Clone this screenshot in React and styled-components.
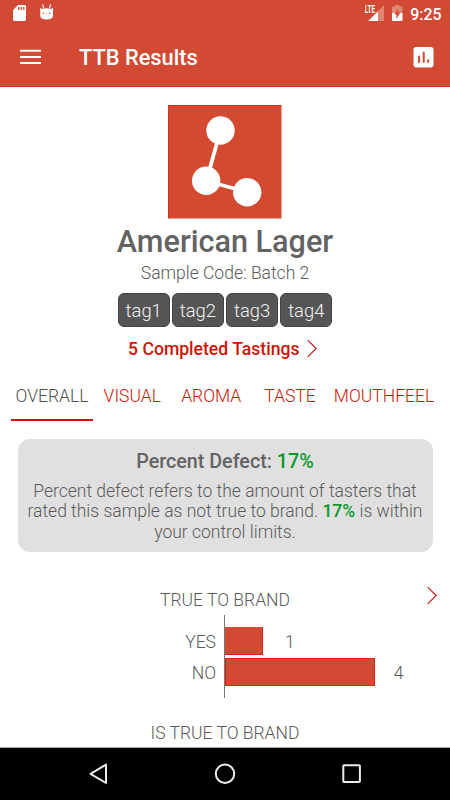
import React from 'react';
import styled, { createGlobalStyle } from 'styled-components';

const BRAND = '#d24a33';
const LINK = '#cf1408';

const GlobalStyle = createGlobalStyle`
  * { box-sizing: border-box; }
  body {
    margin: 0;
    background: #fff;
    color: #5a5a5a;
    font-family: Roboto, sans-serif;
    font-weight: 300;
    font-size: 17.5px;
  }
  svg { display: block; flex: none; }
`;

const Screen = styled.div`
  display: flex;
  flex-direction: column;
  width: 450px;
  height: 800px;
  overflow: hidden;
`;

const Header = styled.header`
  flex: none;
  height: 87px;
  background: ${BRAND};
  border-bottom: 1px solid #d2401c;
  color: #fff;
`;

const StatusBar = styled.div`
  display: flex;
  justify-content: space-between;
  height: 27px;
  padding: 0 8.5px 0 12px;
`;

const StatusGroup = styled.div`
  display: flex;
  gap: ${({ $gap }) => $gap}px;
`;

const Clock = styled.time`
  font-size: 15.9px;
  font-weight: 500;
  line-height: 29px;
`;

const AppBar = styled.div`
  display: flex;
  align-items: center;
  height: 60px;
  padding: 0 16px 0 20px;
`;

const Title = styled.h1`
  flex: 1;
  margin: 2px 0 0 38px;
  font-size: 21.8px;
  font-weight: 500;
  line-height: 58px;
`;

const Content = styled.main`
  flex: 1;
  min-height: 0;
  overflow: hidden;
  display: flex;
  flex-direction: column;
  align-items: center;
  padding-top: 18px;
`;

const SampleName = styled.h2`
  margin: 8px 0 0;
  color: #636363;
  font-size: 30.6px;
  font-weight: 500;
  line-height: 30px;
`;

const SampleCode = styled.div`
  margin-top: 6px;
  line-height: 20px;
`;

const Tags = styled.div`
  display: flex;
  gap: 2.2px;
  margin-top: 10px;
`;

const Tag = styled.span`
  width: 52px;
  height: 34px;
  border: 1px solid #444;
  border-radius: 6px;
  background: #555;
  color: #f4f4f4;
  font-size: 18.4px;
  line-height: 34px;
  text-align: center;
`;

const TastingsLink = styled.a`
  display: flex;
  align-items: center;
  gap: 7.5px;
  margin-top: 12px;
  padding-right: 5px;
  color: ${LINK};
  font-size: 17.6px;
  font-weight: 500;
  line-height: 20px;
`;

const Tabs = styled.nav`
  display: grid;
  grid-template-columns: 82px 78.5px 79.5px 78px 110px;
  width: 428px;
  margin-top: 12px;
`;

const Tab = styled.a`
  height: 50px;
  border-bottom: 2px solid ${({ $active }) => ($active ? '#d40d08' : 'transparent')};
  color: ${({ $active }) => ($active ? '#505050' : LINK)};
  line-height: 50px;
  text-align: center;
`;

const Panel = styled.section`
  flex: none;
  width: 415px;
  height: 112.5px;
  margin-top: 18px;
  padding-top: 11px;
  border-radius: 12px;
  background: #e0e0e0;
  text-align: center;
`;

const PanelTitle = styled.h3`
  margin: 0 0 6.5px;
  color: #636363;
  font-size: 19.7px;
  font-weight: 500;
  line-height: 24px;
`;

const PanelText = styled.p`
  margin: 0;
  padding: 0 8px;
  line-height: 20.5px;
`;

const Good = styled.strong`
  color: #0a982e;
  font-weight: 500;
`;

const ChartHeader = styled.div`
  display: grid;
  grid-template-columns: 1fr auto 1fr;
  width: 450px;
  margin-top: 35px;
  padding-right: 13px;
  padding-left: 13px;
  svg { justify-self: end; }
`;

const ChartTitle = styled.h4`
  grid-column: 2;
  margin: ${({ $top }) => $top || 0}px 0 0;
  font-size: 17.5px;
  font-weight: 300;
  line-height: 20px;
`;

const Plot = styled.div`
  display: grid;
  grid-template-columns: 216px 1fr;
  width: 450px;
  height: 83px;
  margin-top: 5.5px;
`;

const Labels = styled.div`
  display: flex;
  flex-direction: column;
  gap: 3px;
  padding-top: 12.5px;
  text-align: right;
  line-height: 28px;
`;

const Bars = styled.div`
  display: flex;
  flex-direction: column;
  gap: 3px;
  margin-left: 8px;
  padding-top: 12px;
  border-left: 1.5px solid #777;
`;

const BarRow = styled.div`
  display: flex;
  gap: ${({ $gap }) => $gap}px;
  height: 28px;
  line-height: 31px;
`;

const Bar = styled.div`
  height: 28px;
  border: solid #d2280c;
  border-width: ${({ $edge }) => $edge};
  background: ${BRAND};
`;

const SystemNav = styled.footer`
  flex: none;
  display: flex;
  justify-content: space-between;
  align-items: center;
  height: 53px;
  padding: 0 86px;
  border-top: 1px solid #aaa;
  background: #000;
`;

const SdCardIcon = () => (
  <svg width="15" height="26" viewBox="12 0 15 26">
    <path d="M18 5h6.5Q26 5 26 6.5v13Q26 21 24.500 21h-10Q13 21 13 19.500V10.200z" fill="#fff" />
    <path d="M18.800 7v3M21.300 7v3M23.800 7v3" stroke={BRAND} strokeWidth="1.300" />
  </svg>
);

const CatIcon = () => (
  <svg width="15" height="26" viewBox="38.500 0 15 26">
    <path d="M42.200 4.300l1 4M50 4.300l-1 4" stroke="#fff" strokeWidth="1.100" />
    <path d="M39.700 7.800l2 1.200Q46 7.300 50.500 9l2-1.200v7.400q0 4.300-6.400 4.300t-6.400-4.300z" fill="#fff" />
    <circle cx="43" cy="13.300" r=".8" fill={BRAND} />
    <circle cx="49.200" cy="13.300" r=".8" fill={BRAND} />
    <path d="M45.300 13.800h1.600" stroke="#e7a094" strokeWidth=".7" />
  </svg>
);

const SignalIcon = () => (
  <svg width="20" height="26" viewBox="365 0 20 26">
    <path d="M384 5v16h-16z" fill="#fff" opacity=".32" />
    <path d="M378 11.500V21h-9.800z" fill="#fff" />
    <text x="364.800" y="12.500" textLength="10.400" lengthAdjust="spacingAndGlyphs" fontFamily="Roboto, sans-serif" fontSize="10" fontWeight="700" fill="#fff">LTE</text>
  </svg>
);

const BatteryIcon = () => (
  <svg width="11" height="26" viewBox="393 0 11 26">
    <path d="M396 5h4.500v1.500h3V13h-10.500V6.500h3z" fill="#fff" opacity=".34" />
    <path d="M393 13h10.500v7q0 1-1 1H394q-1 0-1-1z" fill="#fff" />
    <path d="M399.300 8.300v4.200h2.200l-4 6.500v-4.500h-2.200z" fill={BRAND} />
  </svg>
);

const MenuIcon = () => (
  <svg width="21" height="16" viewBox="0 0 21 16">
    <path d="M0 1.800h21M0 7.900h21M0 14h21" stroke="#fff" strokeWidth="2" />
  </svg>
);

const ReportIcon = () => (
  <svg width="21" height="21" viewBox="0 0 21 21">
    <rect x=".5" y="0" width="20" height="20.400" rx="2.800" fill="#fff" />
    <path d="M6.100 8.700v7M10.700 4.700v11M15.200 12.400v3.300" stroke={BRAND} strokeWidth="2" />
  </svg>
);

const Logo = () => (
  <svg width="114" height="114" viewBox="0 0 114 114">
    <rect width="113.500" height="113.500" fill="#d44a31" />
    <path d="M.3 113.500V.3h113.200" stroke="#dc1810" strokeWidth=".6" fill="none" />
    <path d="M52.500 25.500L38.300 76l41 11" stroke="#fff" strokeWidth="3.800" fill="none" />
    <g fill="#fff">
      <circle cx="52.500" cy="25.500" r="14.200" />
      <circle cx="38.200" cy="75.800" r="14.200" />
      <circle cx="79.200" cy="87.200" r="14.200" />
    </g>
  </svg>
);

const Chevron = () => (
  <svg width="10" height="18" viewBox="0 0 10 18">
    <path d="M.7.200L9.200 8.500 .7 16.800" stroke={LINK} strokeWidth="1.100" fill="none" />
  </svg>
);

const BackIcon = () => (
  <svg width="24" height="24" viewBox="0 0 24 24">
    <path d="M4.500 11.800L20 2.600v18.400z" fill="none" stroke="#ececec" strokeWidth="2" strokeLinejoin="round" />
  </svg>
);

const HomeIcon = () => (
  <svg width="24" height="24" viewBox="0 0 24 24">
    <circle cx="12" cy="11.800" r="9.200" fill="none" stroke="#ececec" strokeWidth="2" />
  </svg>
);

const RecentsIcon = () => (
  <svg width="24" height="24" viewBox="0 0 24 24">
    <rect x="3.300" y="3.300" width="16.600" height="16.600" rx=".6" fill="none" stroke="#ececec" strokeWidth="2" />
  </svg>
);

const tabs = ['OVERALL', 'VISUAL', 'AROMA', 'TASTE', 'MOUTHFEEL'];
const tags = ['tag1', 'tag2', 'tag3', 'tag4'];
const results = [
  { label: 'YES', count: 1, width: 38, gap: 22, edge: '0 1px 1px 0' },
  { label: 'NO', count: 4, width: 150.3, gap: 18.5, edge: '1px' },
];

export default function App() {
  return (
    <>
      <GlobalStyle />
      <Screen>
        <Header>
          <StatusBar>
            <StatusGroup $gap={11.5}>
              <SdCardIcon />
              <CatIcon />
            </StatusGroup>
            <StatusGroup $gap={7.3}>
              <SignalIcon />
              <BatteryIcon />
              <Clock>9:25</Clock>
            </StatusGroup>
          </StatusBar>
          <AppBar>
            <MenuIcon />
            <Title>TTB Results</Title>
            <ReportIcon />
          </AppBar>
        </Header>
        <Content>
          <Logo />
          <SampleName>American Lager</SampleName>
          <SampleCode>Sample Code: Batch 2</SampleCode>
          <Tags>
            {tags.map((tag) => (
              <Tag key={tag}>{tag}</Tag>
            ))}
          </Tags>
          <TastingsLink>
            5 Completed Tastings
            <Chevron />
          </TastingsLink>
          <Tabs>
            {tabs.map((tab, i) => (
              <Tab key={tab} $active={i === 0}>{tab}</Tab>
            ))}
          </Tabs>
          <Panel>
            <PanelTitle>
              Percent Defect: <Good>17%</Good>
            </PanelTitle>
            <PanelText>
              Percent defect refers to the amount of tasters that rated this sample as not true to brand.{' '}
              <Good>17%</Good> is within your control limits.
            </PanelText>
          </Panel>
          <ChartHeader>
            <ChartTitle $top={3}>TRUE TO BRAND</ChartTitle>
            <Chevron />
          </ChartHeader>
          <Plot>
            <Labels>
              {results.map(({ label }) => (
                <span key={label}>{label}</span>
              ))}
            </Labels>
            <Bars>
              {results.map(({ label, count, width, gap, edge }) => (
                <BarRow key={label} $gap={gap}>
                  <Bar $edge={edge} style={{ width }} />
                  {count}
                </BarRow>
              ))}
            </Bars>
          </Plot>
          <ChartTitle $top={25}>IS TRUE TO BRAND</ChartTitle>
        </Content>
        <SystemNav>
          <BackIcon />
          <HomeIcon />
          <RecentsIcon />
        </SystemNav>
      </Screen>
    </>
  );
}
